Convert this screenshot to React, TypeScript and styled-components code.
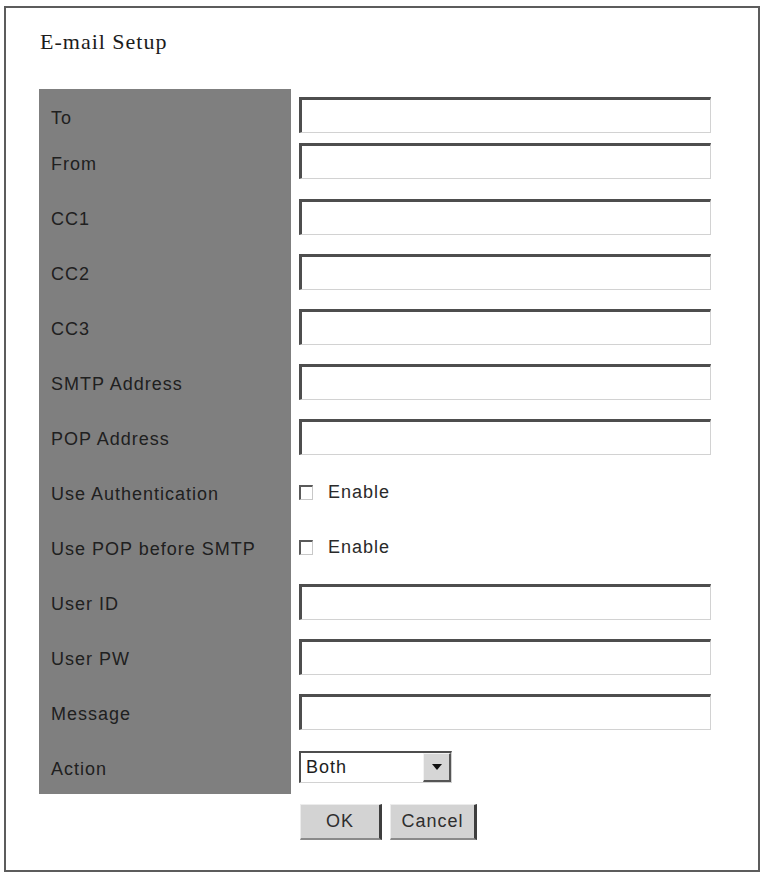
import React from 'react';
import styled, { createGlobalStyle } from 'styled-components';

const GlobalStyle = createGlobalStyle`
    html, body {
        margin: 0;
        padding: 0;
        background: #ffffff;
    }
`;

const Frame = styled.div`
    box-sizing: border-box;
    margin: 6px 0 0 4px;
    width: 756px;
    height: 866px;
    border: 2px solid #5c5c5c;
    padding: 21px 0 0 33px;
    font-family: "Liberation Sans", Arial, sans-serif;
`;

const Title = styled.h1`
    margin: 0 0 35px 1px;
    font-family: "Liberation Serif", "Times New Roman", serif;
    font-size: 22px;
    font-weight: normal;
    letter-spacing: 1px;
    line-height: 25px;
    color: #1c1c1c;
`;

const Row = styled.div<{ $h: number }>`
    display: grid;
    grid-template-columns: 252px 412px;
    column-gap: 8px;
    height: ${(p) => p.$h}px;
`;

const Label = styled.div<{ $blank?: boolean; $pad?: number }>`
    display: flex;
    align-items: center;
    padding: ${(p) => p.$pad ?? 5}px 0 0 12px;
    background: ${(p) => (p.$blank ? 'transparent' : '#7f7f7f')};
    font-size: 18px;
    letter-spacing: 1px;
    color: #202020;
`;

// $pad given: field sits at the top of its row with that padding
const Field = styled.div<{ $pad?: number }>`
    display: flex;
    align-items: ${(p) => (p.$pad !== undefined ? 'flex-start' : 'center')};
    padding-top: ${(p) => p.$pad ?? 0}px;
`;

const TextBox = styled.input`
    box-sizing: border-box;
    width: 412px;
    height: 36px;
    margin: 0;
    border-style: solid;
    border-width: 3px 1px 1px 3px;
    border-color: #4e4e4e #d2d2d2 #d2d2d2 #4e4e4e;
    background: #ffffff;
    outline: none;
`;

const CheckLabel = styled.label`
    display: flex;
    align-items: center;
    gap: 15px;
    font-size: 18px;
    letter-spacing: 1px;
    color: #2a2a2a;
    padding-top: 2px;
`;

const CheckSquare = styled.span`
    box-sizing: border-box;
    display: inline-block;
    width: 14px;
    height: 15px;
    border-style: solid;
    border-width: 2px 1px 1px 2px;
    border-color: #5a5a5a #c8c8c8 #c8c8c8 #5a5a5a;
    background: #ffffff;
`;

const Select = styled.div`
    box-sizing: border-box;
    display: flex;
    width: 153px;
    height: 32px;
    border-style: solid;
    border-width: 2px 1px 1px 2px;
    border-color: #4e4e4e #d2d2d2 #d2d2d2 #4e4e4e;
    background: #ffffff;
`;

const SelectValue = styled.span`
    flex: 1;
    display: flex;
    align-items: center;
    padding-left: 5px;
    font-size: 18px;
    letter-spacing: 1px;
    color: #1e1e1e;
`;

const ArrowButton = styled.span`
    box-sizing: border-box;
    width: 28px;
    display: flex;
    align-items: center;
    justify-content: center;
    background: #d6d6d6;
    border-style: solid;
    border-width: 1px 2px 2px 1px;
    border-color: #f2f2f2 #555555 #555555 #f2f2f2;
    &::after {
        content: '';
        border-left: 5px solid transparent;
        border-right: 5px solid transparent;
        border-top: 6px solid #111111;
    }
`;

const ButtonBar = styled.div`
    display: flex;
    gap: 8px;
    padding-left: 1px;
`;

const Button = styled.button<{ $w: number }>`
    box-sizing: border-box;
    width: ${(p) => p.$w}px;
    height: 36px;
    padding: 0;
    background: #d3d3d3;
    border-style: solid;
    border-width: 1px 3px 2px 1px;
    border-color: #ececec #3e3e3e #8a8a8a #ececec;
    font-family: "Liberation Sans", Arial, sans-serif;
    font-size: 18px;
    letter-spacing: 1px;
    color: #2e2e2e;
`;

const textRows: { name: string; h: number; pad?: number; labelPad?: number }[] = [
    { name: 'To', h: 51, labelPad: 7 },
    { name: 'From', h: 49, pad: 3, labelPad: 0 },
    { name: 'CC1', h: 55 },
    { name: 'CC2', h: 55 },
    { name: 'CC3', h: 55 },
    { name: 'SMTP Address', h: 55 },
    { name: 'POP Address', h: 55 },
];

const checkRows = ['Use Authentication', 'Use POP before SMTP'];

const userRows = ['User ID', 'User PW', 'Message'];

const App = () => {
    return (
        <>
            <GlobalStyle />
            <Frame>
                <Title>E-mail Setup</Title>

                {textRows.map((r) => (
                    <Row key={r.name} $h={r.h}>
                        <Label $pad={r.labelPad}>{r.name}</Label>
                        <Field $pad={r.pad}>
                            <TextBox type="text" />
                        </Field>
                    </Row>
                ))}

                {checkRows.map((name) => (
                    <Row key={name} $h={55}>
                        <Label>{name}</Label>
                        <Field>
                            <CheckLabel>
                                <CheckSquare />
                                Enable
                            </CheckLabel>
                        </Field>
                    </Row>
                ))}

                {userRows.map((name) => (
                    <Row key={name} $h={55}>
                        <Label>{name}</Label>
                        <Field>
                            <TextBox type={name === 'User PW' ? 'password' : 'text'} />
                        </Field>
                    </Row>
                ))}

                <Row $h={55}>
                    <Label>Action</Label>
                    <Field>
                        <Select>
                            <SelectValue>Both</SelectValue>
                            <ArrowButton />
                        </Select>
                    </Field>
                </Row>

                <Row $h={50}>
                    <Label $blank />
                    <Field $pad={10}>
                        <ButtonBar>
                            <Button $w={82}>OK</Button>
                            <Button $w={87}>Cancel</Button>
                        </ButtonBar>
                    </Field>
                </Row>
            </Frame>
        </>
    );
};

export default App;
